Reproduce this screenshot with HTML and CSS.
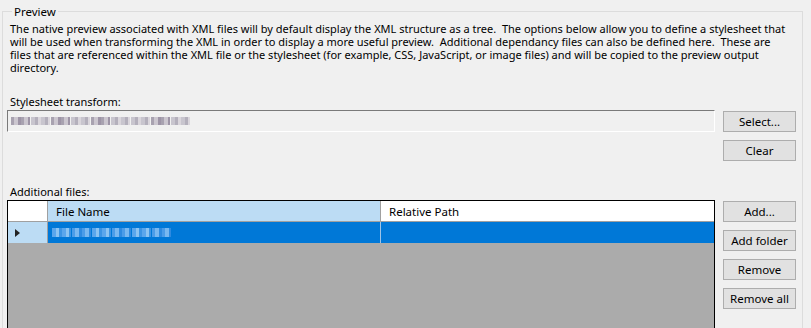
FILE: index.html
```html
<!DOCTYPE html>
<html lang="en">
<head>
    <meta charset="UTF-8">
    <title>Preview settings</title>
    <link rel="stylesheet" href="styles.css">
</head>
<body>
    <fieldset class="group">
        <legend>Preview</legend>
        <div class="desc">
            <div>The native preview associated with XML files will by default display the XML structure as a tree.&nbsp; The options below allow you to define a stylesheet that</div>
            <div>will be used when transforming the XML in order to display a more useful preview.&nbsp; Additional dependancy files can also be defined here.&nbsp; These are</div>
            <div>files that are referenced within the XML file or the stylesheet (for example, CSS, JavaScript, or image files) and will be copied to the preview output</div>
            <div>directory.</div>
        </div>

        <div class="label">Stylesheet transform:</div>
        <div class="row">
            <div class="textbox">
                <span class="blur dark"></span><span class="blur"></span><span class="blur dark"></span><span class="blur"></span><span class="blur dark"></span><span class="blur"></span><span class="blur"></span><span class="blur dark"></span><span class="blur"></span>
            </div>
            <div class="buttons">
                <button>Select...</button>
                <button>Clear</button>
            </div>
        </div>

        <div class="label files-label">Additional files:</div>
        <div class="row">
            <div class="grid">
                <div class="grid-row head">
                    <div class="rowhead"></div>
                    <div class="cell name active">File Name</div>
                    <div class="cell path">Relative Path</div>
                </div>
                <div class="grid-row selected">
                    <div class="rowhead"><span class="arrow"></span></div>
                    <div class="cell name">
                        <span class="blur light"></span><span class="blur"></span><span class="blur light"></span><span class="blur"></span><span class="blur light"></span><span class="blur"></span>
                    </div>
                    <div class="cell path"></div>
                </div>
            </div>
            <div class="buttons">
                <button>Add...</button>
                <button>Add folder</button>
                <button>Remove</button>
                <button>Remove all</button>
            </div>
        </div>
    </fieldset>
</body>
</html>
```

FILE: styles.css
```css
body {
    margin: 0;
    background-color: #f0f0f0;
    font-family: "Noto Sans", "Open Sans", sans-serif;
    font-size: 11px;
    color: #000;
    overflow: hidden;
}
.group {
    margin: 5px 8px 0 2px;
    padding: 0 5px 0 4px;
    border: 1px solid #dcdcdc;
    min-height: 330px;
}
.group legend {
    padding: 0 2px;
    margin-left: 5px;
    line-height: 13px;
    font-size: 11.5px;
}
.desc {
    margin: 4px 0 0 3px;
    white-space: nowrap;
}
.desc div {
    height: 13px;
    line-height: 13px;
}
.label {
    margin: 21px 0 0 3px;
    height: 13px;
    line-height: 13px;
}
.files-label {
    margin-top: 24px;
}
.row {
    display: flex;
    gap: 8px;
    margin-top: 2px;
}
.textbox {
    width: 703px;
    height: 20px;
    border: 1px solid #7a7a7a;
    border-right-color: #fff;
    border-bottom-color: #fff;
    display: flex;
    align-items: center;
    padding-left: 3px;
}
.blur {
    display: inline-block;
    width: 19px;
    height: 8px;
    background: repeating-linear-gradient(90deg, #c8c5ce 0 4px, #b4b0bc 4px 7px, #dad6dc 7px 10px);
    margin-right: 1px;
}
.blur.dark {
    background: repeating-linear-gradient(90deg, #a8a2b0 0 3px, #cbc6cf 3px 7px, #9d94a6 7px 10px);
}
.buttons {
    display: flex;
    flex-direction: column;
    gap: 8px;
    padding-top: 1px;
}
button {
    width: 73px;
    height: 21px;
    padding: 0;
    background-color: #e1e1e1;
    border: 1px solid #adadad;
    font-family: inherit;
    font-size: 11.5px;
    color: #000;
}
.grid {
    width: 706px;
    height: 140px;
    border: 1px solid #000;
    border-bottom: none;
    background-color: #ababab;
}
.grid-row {
    display: flex;
    height: 21px;
}
.grid-row.head {
    height: 20px;
    background-color: #fff;
    border-bottom: 1px solid #a0a0a0;
}
.rowhead {
    width: 40px;
    border-right: 1px solid #a0a0a0;
    display: flex;
    align-items: center;
    padding-left: 7px;
    box-sizing: border-box;
}
.cell {
    display: flex;
    align-items: center;
    padding-left: 8px;
    box-sizing: border-box;
    font-size: 11.5px;
}
.cell.name {
    width: 333px;
    border-right: 1px solid #a0a0a0;
}
.cell.path {
    flex: 1;
}
.head .cell.active {
    background-color: #bcdcf4;
}
.selected .rowhead {
    background-color: #bcdcf4;
}
.selected .cell {
    background-color: #0078d7;
    padding-left: 4px;
}
.selected .cell.name {
    border-right-color: #9fc4e6;
}
.arrow {
    width: 0;
    height: 0;
    border-top: 4px solid transparent;
    border-bottom: 4px solid transparent;
    border-left: 5px solid #222;
}
.selected .blur {
    background: repeating-linear-gradient(90deg, #4b9ce8 0 3px, #79b8f0 3px 7px, #2e8ae0 7px 10px);
    height: 9px;
}
.selected .blur.light {
    background: repeating-linear-gradient(90deg, #5aa6ec 0 4px, #8cc4f2 4px 7px, #3b94e4 7px 10px);
}
```
